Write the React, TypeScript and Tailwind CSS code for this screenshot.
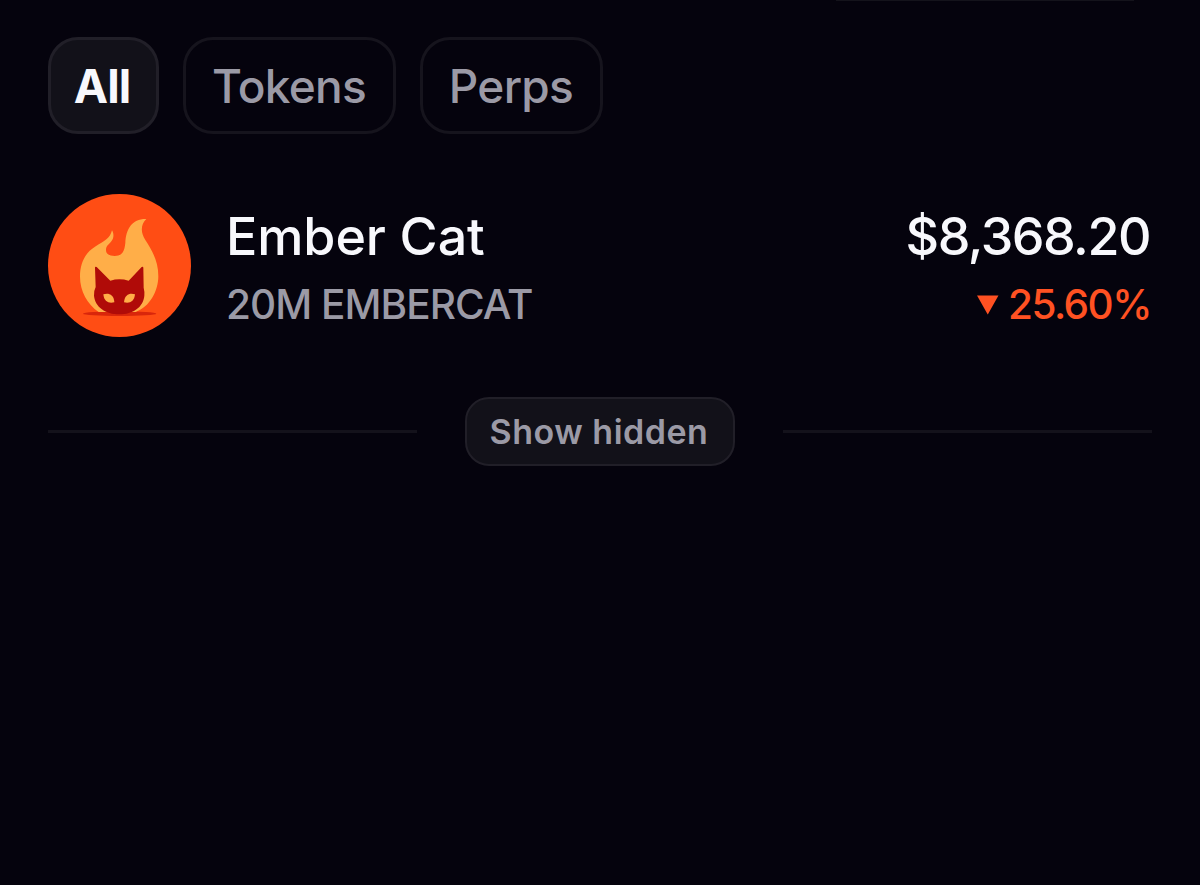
import React from "react";

function EmberCatLogo() {
  return (
    <svg viewBox="24 27 429 429" className="size-[143px] shrink-0" role="img" aria-label="Ember Cat">
      <circle cx="238.5" cy="241.5" r="214.5" fill="#ff4d14" />
      <ellipse cx="239" cy="386" rx="110" ry="7" fill="#d9260b" />
      <path
        d="M176 381C142 358 120 318 120 275C120 233 137 202 165 185C194 168 210 160 216 136C223 148 221 160 214 169C206 179 198 183 198 195C198 207 209 213 224 213C247 213 254 197 256 173C258 132 276 101 319 102C302 117 301 143 316 165C336 196 355 228 355 274C355 318 329 366 287 381Z"
        fill="#ffae48"
      />
      <path
        d="M165 248Q165 243 170 246L211 287Q238 279 266 287L305 246Q310 243 310 249L311 308Q314 319 313 332C310 366 279 388 238 388C197 388 165 366 162 332Q161 318 167 306Z"
        fill="#b00b08"
      />
      <path d="M190 328C203 323 222 326 223 352C207 356 192 351 190 328Z" fill="#ffae48" />
      <path d="M285 328C272 323 254 326 252 352C268 356 283 351 285 328Z" fill="#ffae48" />
    </svg>
  );
}

export default function App() {
  return (
    <main className="h-[885px] w-[1200px] overflow-hidden bg-[#05030d] font-['Inter','Liberation_Sans',sans-serif] text-[#f8f8fc]">
      <div className="ml-[836px] h-px w-[298px] bg-[#14131b]" />

      <nav className="ml-12 mt-9 flex gap-6 text-[46px] font-medium leading-none text-[#9b9aa6]">
        <button className="flex h-[97px] w-[111px] items-center justify-center rounded-[30px] border-[3px] border-[#211f28] bg-[#121119] pr-[3px] font-bold text-[#f8f8fc]">
          <span className="tracking-[-1px]">All</span>
        </button>
        <button className="flex h-[97px] w-[213px] items-center justify-center rounded-[30px] border-[3px] border-[#16141d] pr-px">
          <span className="tracking-[-0.7px]">Tokens</span>
        </button>
        <button className="flex h-[97px] w-[183px] items-center justify-center rounded-[30px] border-[3px] border-[#16141d] pr-px">
          <span className="tracking-[-0.7px]">Perps</span>
        </button>
      </nav>

      <section className="mx-12 mt-[60px] flex h-[143px]">
        <EmberCatLogo />
        <div className="ml-[35px] flex flex-1 flex-col pt-[11px] font-medium">
          <span className="self-start whitespace-nowrap text-[52px] leading-[64px] tracking-[-0.1px]">Ember Cat</span>
          <span className="mt-[10px] self-start whitespace-nowrap text-[40.5px] leading-[51px] tracking-[-0.95px] text-[#9b9aa6]">20M EMBERCAT</span>
        </div>
        <div className="flex flex-col items-end pt-[11px] font-medium">
          <span className="mr-[2px] whitespace-nowrap text-[52px] leading-[64px] tracking-[-1.5px]">$8,368.20</span>
          <div className="mr-px mt-[10px] flex items-center text-[40.5px] leading-[51px] text-[#ff5122]">
            <svg viewBox="0 0 22 20" className="mr-[9px] h-5 w-[22px]">
              <path d="M0 0.5H21.5L10.75 19.5Z" fill="currentColor" />
            </svg>
            <span className="tracking-[-1.5px]">25.60%</span>
          </div>
        </div>
      </section>

      <div className="mx-12 mt-[60px] flex items-center gap-12">
        <div className="h-[3px] flex-1 bg-[#14121b]" />
        <button className="flex h-[69px] w-[270px] items-center justify-center rounded-[24px] border-2 border-[#211f28] bg-[#121119] pr-[2px] text-[34px] font-semibold leading-none text-[#9b9aa6]">
          <span className="whitespace-nowrap tracking-[0.5px]">Show hidden</span>
        </button>
        <div className="h-[3px] flex-1 bg-[#14121b]" />
      </div>
    </main>
  );
}
